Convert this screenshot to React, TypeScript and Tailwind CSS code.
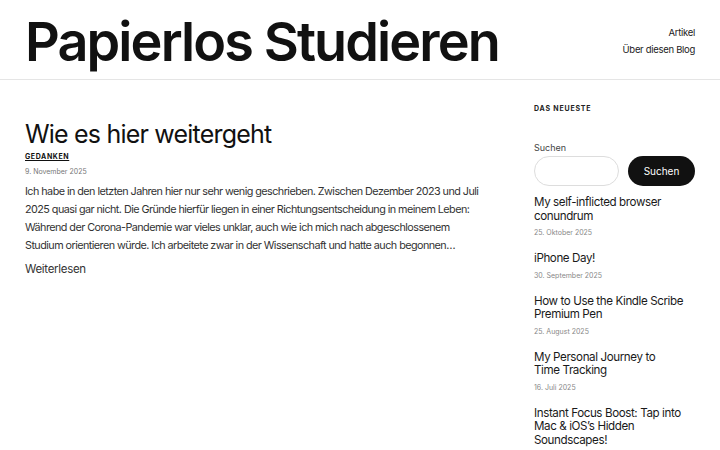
const posts = [
  { lines: ["My self-inflicted browser", "conundrum"], date: "25. Oktober 2025" },
  { lines: ["iPhone Day!"], date: "30. September 2025" },
  { lines: ["How to Use the Kindle Scribe", "Premium Pen"], date: "25. August 2025" },
  { lines: ["My Personal Journey to", "Time Tracking"], date: "16. Juli 2025" },
  { lines: ["Instant Focus Boost: Tap into", "Mac & iOS’s Hidden", "Soundscapes!"], date: "" },
];

export default function App() {
  return (
    <div className="min-h-screen bg-white text-[#111] font-['Inter',sans-serif]">
      <header className="flex items-center justify-between px-[25px] h-[80px] border-b border-[#e5e5e5]">
        <h1 className="text-[54px] font-semibold tracking-[-1.9px] leading-none pt-[4px]">Papierlos Studieren</h1>
        <nav className="flex flex-col items-end gap-[2px] text-[9.5px] text-[#222] tracking-[-0.3px] mt-[4px]">
          <a>Artikel</a>
          <a>Über diesen Blog</a>
        </nav>
      </header>

      <div className="flex px-[25px] gap-[34px]">
        <main className="flex-1 pt-[38px] pr-[13px]">
          <h2 className="text-[25px] font-normal leading-[32px] tracking-[-0.8px]">Wie es hier weitergeht</h2>
          <div className="mt-[2px] text-[7px] font-bold tracking-[0.6px] underline">GEDANKEN</div>
          <div className="mt-[4px] text-[7px] text-[#777]">9. November 2025</div>
          <p className="mt-[6px] text-[10.8px] leading-[18px] text-[#333] tracking-[-0.55px]">
            Ich habe in den letzten Jahren hier nur sehr wenig geschrieben. Zwischen Dezember 2023 und Juli 2025 quasi gar nicht. Die Gründe hierfür liegen in einer Richtungsentscheidung in meinem Leben: Während der Corona-Pandemie war vieles unklar, auch wie ich mich nach abgeschlossenem Studium orientieren würde. Ich arbeitete zwar in der Wissenschaft und hatte auch begonnen…
          </p>
          <a className="block mt-[6px] text-[11.5px] text-[#333] tracking-[-0.3px]">Weiterlesen</a>
        </main>

        <aside className="w-[161px] pt-[24px]">
          <div className="text-[7px] font-bold tracking-[0.8px] text-[#222]">DAS NEUESTE</div>
          <div className="mt-[26px] text-[9px] text-[#444]">Suchen</div>
          <div className="mt-[2px] flex gap-[9px]">
            <input className="w-[85px] h-[30px] rounded-full border border-[#ddd]" />
            <button className="flex-1 h-[30px] rounded-full bg-[#111] text-white text-[10px]">Suchen</button>
          </div>
          <ul className="mt-[10px] flex flex-col gap-[13.5px]">
            {posts.map((p) => (
              <li key={p.lines[0]}>
                <div className="text-[11.6px] leading-[13.5px] font-normal tracking-[-0.4px] text-[#1a1a1a]">
                  {p.lines.map((l) => (
                    <div key={l} className="whitespace-nowrap">{l}</div>
                  ))}
                </div>
                {p.date && <div className="mt-[5px] text-[7px] text-[#888]">{p.date}</div>}
              </li>
            ))}
          </ul>
        </aside>
      </div>
    </div>
  );
}
